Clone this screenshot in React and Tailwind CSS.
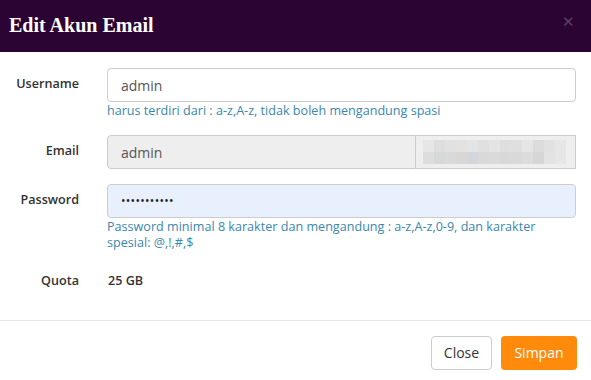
import { useState } from 'react';

const blurCells = [
  ['#e6e6e6', '#dedede', '#e1e1e1', '#e3e2e0', '#e2e4e6', '#dfe0e1', '#e4e4e4', '#dedede', '#dfdfdf', '#e5e5e5', '#dcdcdc', '#e1e1e1', '#e6e6e6'],
  ['#dedddb', '#d7d9d9', '#d9d9d9', '#d8d7d5', '#d3d6db', '#d9d9d9', '#dadada', '#d8d8d8', '#d9d9d9', '#dcdcdc', '#d6d6d6', '#e3e3e3', '#e6e6e6']
];

const EditAkunEmail = () => {
  const [username, setUsername] = useState('admin');

  return (
    <div className="w-[591px] h-[380px] bg-white font-['Open_Sans',sans-serif] text-[12.6px] text-[#333]">
      {/* Header */}
      <div className="h-[52px] bg-[#2b0433] flex items-center justify-between pl-[9px] pr-[16px]">
        <h4 className="text-white text-[20px] font-bold font-['Liberation_Serif',serif] leading-none pb-[2px]">
          Edit Akun Email
        </h4>
        <span className="self-start mt-[14px] text-[#5c3f63] text-[15px] leading-none">✕</span>
      </div>

      {/* Body */}
      <div className="pt-[16px] pr-[15px]">
        {/* Username */}
        <div className="flex">
          <label className="w-[79px] shrink-0 text-right font-semibold pt-[7px]">Username</label>
          <div className="ml-[28px] flex-1">
            <input
              value={username}
              onChange={e => setUsername(e.target.value)}
              className="w-full h-[34px] border border-[#cccccc] rounded-[4px] px-[13px] text-[14px] text-[#555] outline-none"
            />
            <p className="text-[#3a87ad] leading-[17px]">harus terdiri dari : a-z,A-z, tidak boleh mengandung spasi</p>
          </div>
        </div>

        {/* Email */}
        <div className="flex mt-[16px]">
          <label className="w-[79px] shrink-0 text-right font-semibold pt-[7px]">Email</label>
          <div className="ml-[28px] flex-1 flex">
            <div className="w-[309px] h-[34px] bg-[#eeeeee] border border-[#cccccc] rounded-l-[4px] px-[13px] flex items-center text-[14px] text-[#555]">
              admin
            </div>
            <div className="flex-1 h-[34px] bg-[#eeeeee] border border-l-0 border-[#cccccc] flex items-center pl-[7px]">
              <div className="flex flex-col">
                {blurCells.map((row, i) => (
                  <div key={i} className="flex">
                    {row.map((c, j) => (
                      <div key={j} className="w-[11px] h-[12px]" style={{ backgroundColor: c }} />
                    ))}
                  </div>
                ))}
              </div>
            </div>
          </div>
        </div>

        {/* Password */}
        <div className="flex mt-[15px]">
          <label className="w-[79px] shrink-0 text-right font-semibold pt-[7px]">Password</label>
          <div className="ml-[28px] flex-1">
            <div className="w-full h-[34px] bg-[#e8f0fe] border border-[#cccccc] rounded-[4px] px-[13px] flex items-center text-[12px] text-[#222] tracking-[0.3px]">
              •••••••••••
            </div>
            <p className="text-[#3a87ad] leading-[16px] mt-[1px]">
              Password minimal 8 karakter dan mengandung : a-z,A-z,0-9, dan karakter spesial: @,!,#,$
            </p>
          </div>
        </div>

        {/* Quota */}
        <div className="flex mt-[21px]">
          <label className="w-[79px] shrink-0 text-right font-semibold">Quota</label>
          <div className="ml-[29px] font-semibold">25 GB</div>
        </div>
      </div>

      {/* Footer */}
      <div className="mt-[29px] border-t border-[#e5e5e5] flex justify-end gap-[9px] pt-[15px] pr-[14px]">
        <button className="w-[61px] h-[34px] border border-[#cccccc] rounded-[4px] bg-white text-[14px] text-[#333]">Close</button>
        <button className="w-[76px] h-[34px] rounded-[4px] bg-[#ff8a0c] text-[14px] text-white">Simpan</button>
      </div>
    </div>
  );
};

export default EditAkunEmail;
